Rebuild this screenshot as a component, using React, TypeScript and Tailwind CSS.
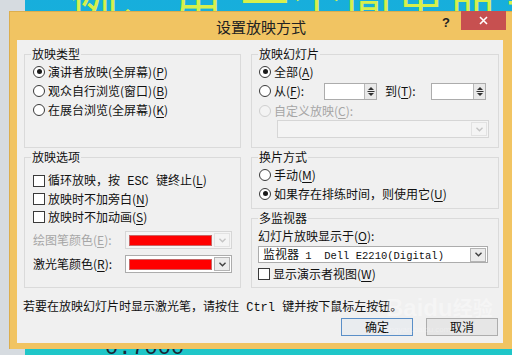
import type { ReactNode } from 'react';

const cjk = "font-['Noto_Sans_CJK_SC','Noto_Sans',sans-serif]";
const mono = "font-['Liberation_Mono',monospace]";

function Radio({ checked = false, disabled = false }: { checked?: boolean; disabled?: boolean }) {
  return (
    <span
      className={`w-[12px] h-[12px] rounded-full border flex items-center justify-center shrink-0 ${
        disabled ? 'border-[#cfcfcf] bg-[#f3f3f3]' : 'border-[#3a3a3a] bg-white'
      }`}
    >
      {checked && <span className="w-[5px] h-[5px] rounded-full bg-[#1a1a1a]" />}
    </span>
  );
}

function Check() {
  return <span className="w-[12px] h-[12px] border border-[#3a3a3a] bg-white shrink-0" />;
}

function Key({ k }: { k: string }) {
  return (
    <>
      (<span className="underline underline-offset-2">{k}</span>)
    </>
  );
}

function Chevron({ disabled = false }: { disabled?: boolean }) {
  return (
    <svg width="7" height="5" viewBox="0 0 7 5">
      <path d="M0.5 0.8 L3.5 3.8 L6.5 0.8" fill="none" stroke={disabled ? '#c4c4c4' : '#404040'} strokeWidth="1.4" />
    </svg>
  );
}

function ArrowBox({ disabled = false }: { disabled?: boolean }) {
  return (
    <div
      className={`w-[16px] h-[14px] border flex items-center justify-center shrink-0 ${
        disabled ? 'border-[#e2e2e2] bg-[#f4f4f4]' : 'border-[#b4b4b4] bg-[#ececec]'
      }`}
    >
      <Chevron disabled={disabled} />
    </div>
  );
}

function ColorCombo({ disabled = false }: { disabled?: boolean }) {
  return (
    <div
      className={`w-[107px] h-[18px] border flex items-center pl-[3px] pr-[1px] gap-[2px] ${
        disabled ? 'border-[#d6d6d6] bg-[#f4f4f4]' : 'border-[#acacac] bg-white'
      }`}
    >
      <div className="flex-1 h-[11px] bg-[#ff0000] border border-[#c86464]" />
      <ArrowBox disabled={disabled} />
    </div>
  );
}

function Spin({ w }: { w: string }) {
  return (
    <div className={`${w} h-[17px] border border-[#acacac] bg-white flex justify-end`}>
      <div className="w-[12px] h-full bg-[#e9e9e9] border-l border-[#b8b8b8] flex items-center justify-center">
        <svg width="8" height="11" viewBox="0 0 8 11">
          <path d="M4 1 L7 4 H1 Z" fill="#303030" />
          <path d="M0.5 5.5 H7.5" stroke="#303030" strokeWidth="1" />
          <path d="M1 7 H7 L4 10 Z" fill="#303030" />
        </svg>
      </div>
    </div>
  );
}

function Group({ title, className, children }: { title: string; className: string; children: ReactNode }) {
  return (
    <fieldset className={`border border-[#dadada] min-w-0 ${className}`}>
      <legend className="ml-[6px] px-[1px] text-[12px] leading-[16px]">{title}</legend>
      {children}
    </fieldset>
  );
}

export default function App() {
  return (
    <div className={`relative w-[512px] h-[355px] overflow-hidden bg-[#d6dbe0] ${cjk} text-[#111]`}>
      {/* slide behind the dialog: only thin strips show */}
      <div className="absolute left-[25px] top-0 right-0 bottom-0 bg-linear-to-b from-[#17aedc] to-[#1fc6c8]" />
      <div className="absolute left-[25px] top-0 right-0 h-[11px] overflow-hidden">
        <div className="ml-[45px] mt-[-26px] text-[48px] leading-none tracking-[4px] text-[#d6ef4c] whitespace-nowrap">
          例、用 一个简单命令求解线性
        </div>
      </div>
      <div className="absolute left-[25px] top-[349px] right-0 bottom-0 overflow-hidden">
        <div className={`ml-[80px] mt-[-11px] text-[22px] leading-none text-[#1a2536] ${mono}`}>0.7000</div>
      </div>

      {/* dialog */}
      <div className="absolute left-[9px] top-[11px] w-[503px] h-[338px] bg-[#f1c462] border-l border-t border-[#dcae4e] flex flex-col">
        <div className="relative h-[28px] shrink-0">
          <div className="text-center text-[15px] leading-[29px] text-[#222]">设置放映方式</div>
          <div className="absolute top-[-1px] right-[6px] flex items-start">
            <span className="mt-[5px] mr-[11px] text-[13px] font-bold leading-none text-[#222] font-['Liberation_Sans',sans-serif]">?</span>
            <div className="w-[45px] h-[19px] bg-[#c75050] flex items-center justify-center">
              <svg width="9" height="9" viewBox="0 0 9 9">
                <path d="M1 1 L8 8 M8 1 L1 8" stroke="#fff" strokeWidth="1.6" />
              </svg>
            </div>
          </div>
        </div>

        <div className="ml-[7px] w-[486px] h-[303px] bg-[#f0f0f0] pt-[6px] pl-[7px] flex flex-col text-[12px]">
          <div className="flex gap-[10px]">
            {/* left column */}
            <div className="w-[217px] flex flex-col gap-[1px]">
              <Group title="放映类型" className="h-[102px]">
                <div className="pl-[8px]">
                  <div className="h-[19px] flex items-center gap-[3px]">
                    <Radio checked />
                    <span>演讲者放映(全屏幕)<Key k="P" /></span>
                  </div>
                  <div className="h-[19px] flex items-center gap-[3px]">
                    <Radio />
                    <span>观众自行浏览(窗口)<Key k="B" /></span>
                  </div>
                  <div className="h-[19px] flex items-center gap-[3px]">
                    <Radio />
                    <span>在展台浏览(全屏幕)<Key k="K" /></span>
                  </div>
                </div>
              </Group>

              <Group title="放映选项" className="h-[139px]">
                <div className="pl-[8px] pt-[7px]">
                  <div className="h-[18px] flex items-center gap-[3px]">
                    <Check />
                    <span className="whitespace-pre">
                      循环放映，按<span className={`${mono} text-[12px]`}> ESC </span>键终止<Key k="L" />
                    </span>
                  </div>
                  <div className="h-[18px] flex items-center gap-[3px]">
                    <Check />
                    <span>放映时不加旁白<Key k="N" /></span>
                  </div>
                  <div className="h-[18px] flex items-center gap-[3px]">
                    <Check />
                    <span>放映时不加动画<Key k="S" /></span>
                  </div>
                  <div className="mt-[2px] h-[24px] flex items-center">
                    <span className="w-[92px] text-[#a6a6a6]">绘图笔颜色<Key k="E" />:</span>
                    <ColorCombo disabled />
                  </div>
                  <div className="h-[24px] flex items-center">
                    <span className="w-[92px]">激光笔颜色<Key k="R" />:</span>
                    <ColorCombo />
                  </div>
                </div>
              </Group>
            </div>

            {/* right column */}
            <div className="w-[248px] flex flex-col gap-[1px]">
              <Group title="放映幻灯片" className="h-[102px]">
                <div className="pl-[7px]">
                  <div className="h-[19px] flex items-center gap-[3px]">
                    <Radio checked />
                    <span>全部<Key k="A" /></span>
                  </div>
                  <div className="h-[20px] flex items-center">
                    <Radio />
                    <span className="ml-[3px] w-[50px]">从<Key k="F" />:</span>
                    <Spin w="w-[53px]" />
                    <span className="ml-[8px] w-[46px]">到<Key k="T" />:</span>
                    <Spin w="w-[55px]" />
                  </div>
                  <div className="h-[19px] flex items-center gap-[3px] text-[#a6a6a6]">
                    <Radio disabled />
                    <span>自定义放映<Key k="C" />:</span>
                  </div>
                  <div className="ml-[18px] w-[212px] h-[18px] border border-[#d6d6d6] bg-[#f4f4f4] flex items-center justify-end pr-[1px]">
                    <ArrowBox disabled />
                  </div>
                </div>
              </Group>

              <Group title="换片方式" className="h-[60px]">
                <div className="pl-[7px]">
                  <div className="h-[19px] flex items-center gap-[3px]">
                    <Radio />
                    <span>手动<Key k="M" /></span>
                  </div>
                  <div className="h-[19px] flex items-center gap-[3px]">
                    <Radio checked />
                    <span>如果存在排练时间，则使用它<Key k="U" /></span>
                  </div>
                </div>
              </Group>

              <Group title="多监视器" className="h-[78px]">
                <div className="pl-[6px]">
                  <div className="h-[20px] flex items-center">
                    幻灯片放映显示于<Key k="O" />:
                  </div>
                  <div className="w-[230px] h-[17px] border border-[#acacac] bg-white flex items-center pl-[4px] pr-[1px]">
                    <span className="flex-1 whitespace-pre leading-none">
                      监视器<span className={`${mono} text-[10.5px]`}> 1  Dell E2210(Digital)</span>
                    </span>
                    <ArrowBox />
                  </div>
                  <div className="h-[22px] flex items-center gap-[3px]">
                    <Check />
                    <span>显示演示者视图<Key k="W" /></span>
                  </div>
                </div>
              </Group>
            </div>
          </div>

          <div className="mt-[10px] -ml-px leading-[16px] whitespace-pre">
            若要在放映幻灯片时显示激光笔，请按住<span className={`${mono} text-[12px]`}> Ctrl </span>键并按下鼠标左按钮。
          </div>

          <div className="mt-[2px] pr-[5px] flex justify-end gap-[13px]">
            <button className="w-[72px] h-[18px] border border-[#5a8fc8] bg-[#e9ecef] text-[12px] leading-none">确定</button>
            <button className="w-[72px] h-[18px] border border-[#adadad] bg-[#e6e6e6] text-[12px] leading-none">取消</button>
          </div>
        </div>
      </div>

      {/* watermark */}
      <div className="absolute left-[386px] top-[296px] flex flex-col items-start pointer-events-none">
        <span className="text-[24px] font-bold leading-none text-white/35 font-['Liberation_Sans',sans-serif]">
          Baidu<span className={`${cjk} text-[20px]`}>经验</span>
        </span>
        <span className="mt-[6px] text-[8px] leading-none text-white/30 font-['Liberation_Sans',sans-serif]">jingyan.baidu.com</span>
      </div>
    </div>
  );
}
